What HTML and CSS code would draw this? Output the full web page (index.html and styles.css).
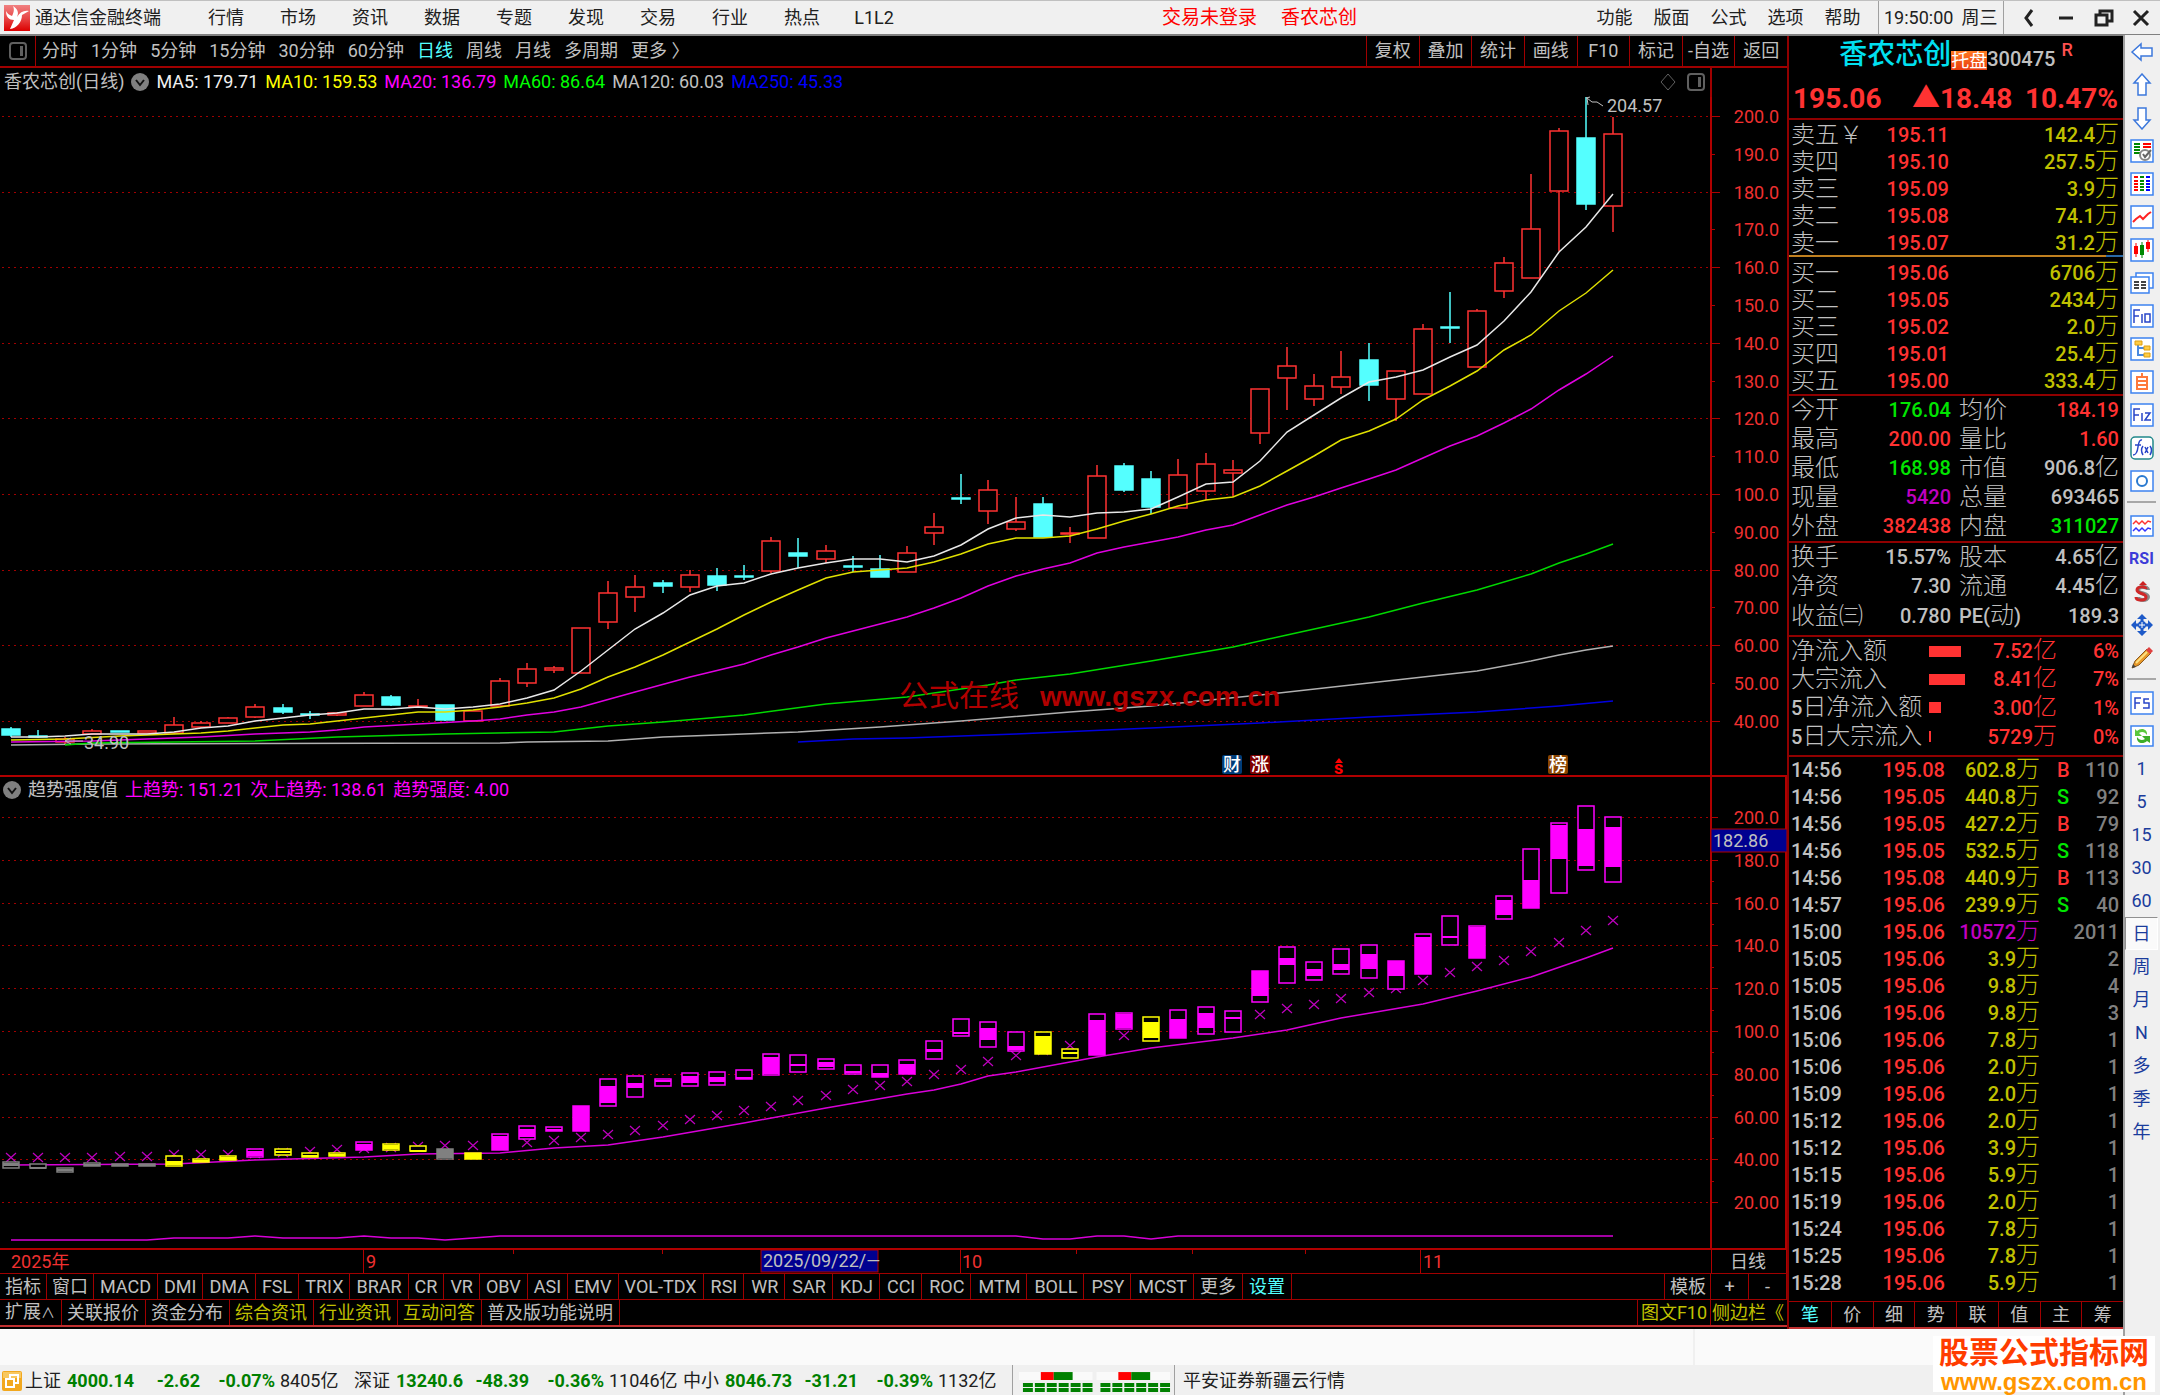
FILE: index.html
```html
<!DOCTYPE html>
<html lang="zh-CN">
<head>
<meta charset="utf-8">
<title>通达信金融终端</title>
<link rel="stylesheet" href="styles.css">
</head>
<body>
<header class="menubar">
  <svg class="logo" viewBox="0 0 26 26" aria-hidden="true"><defs><linearGradient id="lg" x1="0" y1="0" x2="0" y2="1"><stop offset="0" stop-color="#f08080"/><stop offset=".5" stop-color="#e84848"/><stop offset="1" stop-color="#dc0000"/></linearGradient></defs><rect width="26" height="26" fill="url(#lg)"/><path d="M2 6C2 12 5 15 10 15L6 24C13 23 18 17 18 10L25 6C20 5 16 7 13 12C15 8 14 4 9 1C11 5 9 9 8 11C5 10 3 8 2 6Z" fill="#fff"/></svg>
  <h1>通达信金融终端</h1>
  <nav class="menu-main">
    <button>行情</button><button>市场</button><button>资讯</button><button>数据</button><button>专题</button><button>发现</button><button>交易</button><button>行业</button><button>热点</button><button>L1L2</button>
  </nav>
  <div class="login"><span>交易未登录</span><span>香农芯创</span></div>
  <nav class="menu-side">
    <button>功能</button><button>版面</button><button>公式</button><button>选项</button><button>帮助</button>
  </nav>
  <div class="clock"><span>19:50:00</span><span>周三</span></div>
  <div class="win">
    <button aria-label="后退"><svg viewBox="0 0 20 20"><path d="M13 2L7 10L13 18" /></svg></button>
    <button aria-label="最小化"><svg viewBox="0 0 20 20"><path d="M3 10H17"/></svg></button>
    <button aria-label="还原"><svg viewBox="0 0 20 20"><path d="M2 7H13V17H2ZM6 7V3H18V13H13"/></svg></button>
    <button aria-label="关闭"><svg viewBox="0 0 20 20"><path d="M3 3L17 17M17 3L3 17"/></svg></button>
  </div>
</header>
<div class="shell">
<div class="work">
<main class="desk">
  <section class="charts">
    <div class="periods">
      <button class="pane" aria-label="面板"><svg viewBox="0 0 18 18"><rect x="1" y="1" width="16" height="16" rx="3"/><path class="f" d="M11 4h3v10h-3z"/></svg></button>
      <nav class="period-list">
        <button>分时</button><button>1分钟</button><button>5分钟</button><button>15分钟</button><button>30分钟</button><button>60分钟</button><button class="on">日线</button><button>周线</button><button>月线</button><button>多周期</button><button>更多 〉</button>
      </nav>
      <nav class="period-tools">
        <button>复权</button><button>叠加</button><button>统计</button><button>画线</button><button>F10</button><button>标记</button><button>-自选</button><button>返回</button>
      </nav>
    </div>
    <div class="legend legend-k">
      <div class="legend-text">
        <span class="name">香农芯创(日线)</span>
        <button class="fold" aria-label="展开"><svg viewBox="0 0 18 18"><circle cx="9" cy="9" r="9"/><path d="M5 7l4 5l4-5"/></svg></button>
        <span class="c-white">MA5: 179.71</span><span class="c-yellow">MA10: 159.53</span><span class="c-mag">MA20: 136.79</span><span class="c-green">MA60: 86.64</span><span class="c-gray">MA120: 60.03</span><span class="c-blue">MA250: 45.33</span>
        <span class="legend-tools"><svg viewBox="0 0 18 18"><path d="M9 1L16 9L9 17L2 9Z"/></svg><svg viewBox="0 0 18 18"><rect x="1" y="1" width="16" height="16" rx="3"/><path class="f" d="M11 4h3v10h-3z"/></svg></span>
      </div>
      <div class="axis-cell"></div>
    </div>
    <svg id="kline" class="plot" viewBox="0 97 1787 678" role="img" aria-label="日线K线图"></svg>
    <div class="legend legend-t">
      <div class="legend-text">
        <button class="fold" aria-label="展开"><svg viewBox="0 0 18 18"><circle cx="9" cy="9" r="9"/><path d="M5 7l4 5l4-5"/></svg></button>
        <span class="c-gray">趋势强度值</span><span class="c-mag">上趋势: 151.21</span><span class="c-mag">次上趋势: 138.61</span><span class="c-mag">趋势强度: 4.00</span>
      </div>
      <div class="axis-cell box"></div>
    </div>
    <svg id="trend" class="plot" viewBox="0 803 1787 470" role="img" aria-label="趋势强度值"></svg>
    <div class="tabs tabs-ind">
      <button>指标</button><button>窗口</button><button>MACD</button><button>DMI</button><button>DMA</button><button>FSL</button><button>TRIX</button><button>BRAR</button><button>CR</button><button>VR</button><button>OBV</button><button>ASI</button><button>EMV</button><button>VOL-TDX</button><button>RSI</button><button>WR</button><button>SAR</button><button>KDJ</button><button>CCI</button><button>ROC</button><button>MTM</button><button>BOLL</button><button>PSY</button><button>MCST</button><button>更多</button><button class="on">设置</button>
      <span class="fill"></span><button>模板</button><button class="half">+</button><button class="half">-</button>
    </div>
    <div class="tabs tabs-ext">
      <button>扩展<small>∧</small></button><button>关联报价</button><button>资金分布</button><button class="hot">综合资讯</button><button class="hot">行业资讯</button><button class="hot">互动问答</button><button>普及版功能说明</button>
      <span class="fill"></span><button class="hot f10">图文F10</button><button class="hot sidebar-btn">侧边栏《</button>
    </div>
  </section>

  <aside class="quote">
    <div class="q-head">
      <div class="q-name"><strong>香农芯创</strong><em>托盘</em><span>300475</span><sup>R</sup></div>
      <div class="q-price"><b>195.06</b><b>▲18.48</b><b>10.47%</b></div>
    </div>
    <table class="book sell">
      <tr><th>卖五￥</th><td>195.11</td><td>142.4<i>万</i></td></tr>
      <tr><th>卖四</th><td>195.10</td><td>257.5<i>万</i></td></tr>
      <tr><th>卖三</th><td>195.09</td><td>3.9<i>万</i></td></tr>
      <tr><th>卖二</th><td>195.08</td><td>74.1<i>万</i></td></tr>
      <tr><th>卖一</th><td>195.07</td><td>31.2<i>万</i></td></tr>
    </table>
    <div class="ratio"><span></span></div>
    <table class="book buy">
      <tr><th>买一</th><td>195.06</td><td>6706<i>万</i></td></tr>
      <tr><th>买二</th><td>195.05</td><td>2434<i>万</i></td></tr>
      <tr><th>买三</th><td>195.02</td><td>2.0<i>万</i></td></tr>
      <tr><th>买四</th><td>195.01</td><td>25.4<i>万</i></td></tr>
      <tr><th>买五</th><td>195.00</td><td>333.4<i>万</i></td></tr>
    </table>
    <table class="stats">
      <tr><th>今开</th><td class="up2">176.04</td><th>均价</th><td class="red">184.19</td></tr>
      <tr><th>最高</th><td class="red">200.00</td><th>量比</th><td class="red">1.60</td></tr>
      <tr><th>最低</th><td class="up2">168.98</td><th>市值</th><td>906.8<i>亿</i></td></tr>
      <tr><th>现量</th><td class="pur">5420</td><th>总量</th><td>693465</td></tr>
      <tr><th>外盘</th><td class="red">382438</td><th>内盘</th><td class="up2">311027</td></tr>
    </table>
    <table class="stats fin">
      <tr><th>换手</th><td>15.57%</td><th>股本</th><td>4.65<i>亿</i></td></tr>
      <tr><th>净资</th><td>7.30</td><th>流通</th><td>4.45<i>亿</i></td></tr>
      <tr><th>收益㈢</th><td>0.780</td><th><b>PE(</b>动<b>)</b></th><td>189.3</td></tr>
    </table>
    <table class="flow">
      <tr><th>净流入额</th><td><span class="bar" style="width:32px"></span></td><td>7.52<i>亿</i></td><td>6%</td></tr>
      <tr><th>大宗流入</th><td><span class="bar" style="width:36px"></span></td><td>8.41<i>亿</i></td><td>7%</td></tr>
      <tr><th><b>5</b>日净流入额</th><td><span class="bar" style="width:12px"></span></td><td>3.00<i>亿</i></td><td>1%</td></tr>
      <tr><th><b>5</b>日大宗流入</th><td><span class="bar" style="width:2px"></span></td><td>5729<i>万</i></td><td>0%</td></tr>
    </table>
    <table class="ticks">
      <tr><td>14:56</td><td>195.08</td><td>602.8<i>万</i></td><td class="red">B</td><td>110</td></tr>
      <tr><td>14:56</td><td>195.05</td><td>440.8<i>万</i></td><td class="up2">S</td><td>92</td></tr>
      <tr><td>14:56</td><td>195.05</td><td>427.2<i>万</i></td><td class="red">B</td><td>79</td></tr>
      <tr><td>14:56</td><td>195.05</td><td>532.5<i>万</i></td><td class="up2">S</td><td>118</td></tr>
      <tr><td>14:56</td><td>195.08</td><td>440.9<i>万</i></td><td class="red">B</td><td>113</td></tr>
      <tr><td>14:57</td><td>195.06</td><td>239.9<i>万</i></td><td class="up2">S</td><td>40</td></tr>
      <tr><td>15:00</td><td>195.06</td><td class="pur">10572<i>万</i></td><td></td><td>2011</td></tr>
      <tr><td>15:05</td><td>195.06</td><td>3.9<i>万</i></td><td></td><td>2</td></tr>
      <tr><td>15:05</td><td>195.06</td><td>9.8<i>万</i></td><td></td><td>4</td></tr>
      <tr><td>15:06</td><td>195.06</td><td>9.8<i>万</i></td><td></td><td>3</td></tr>
      <tr><td>15:06</td><td>195.06</td><td>7.8<i>万</i></td><td></td><td>1</td></tr>
      <tr><td>15:06</td><td>195.06</td><td>2.0<i>万</i></td><td></td><td>1</td></tr>
      <tr><td>15:09</td><td>195.06</td><td>2.0<i>万</i></td><td></td><td>1</td></tr>
      <tr><td>15:12</td><td>195.06</td><td>2.0<i>万</i></td><td></td><td>1</td></tr>
      <tr><td>15:12</td><td>195.06</td><td>3.9<i>万</i></td><td></td><td>1</td></tr>
      <tr><td>15:15</td><td>195.06</td><td>5.9<i>万</i></td><td></td><td>1</td></tr>
      <tr><td>15:19</td><td>195.06</td><td>2.0<i>万</i></td><td></td><td>1</td></tr>
      <tr><td>15:24</td><td>195.06</td><td>7.8<i>万</i></td><td></td><td>1</td></tr>
      <tr><td>15:25</td><td>195.06</td><td>7.8<i>万</i></td><td></td><td>1</td></tr>
      <tr><td>15:28</td><td>195.06</td><td>5.9<i>万</i></td><td></td><td>1</td></tr>
    </table>
    <nav class="q-tabs"><button class="on">笔</button><button>价</button><button>细</button><button>势</button><button>联</button><button>值</button><button>主</button><button>筹</button></nav>
  </aside>
</main>
<div class="strip"><span></span><span></span></div>
<footer class="status">
  <svg class="st-icon" viewBox="0 0 20 20" aria-hidden="true"><rect width="20" height="20" rx="2" fill="#f2a81e"/><rect x="1" y="1" width="18" height="6" fill="#f8c860"/><path d="M8 8V4h8v8h-4M4 8h8v8H4z" fill="none" stroke="#fff" stroke-width="2"/></svg>
  <div class="idx"><span>上证</span><b>4000.14</b><b>-2.62</b><b>-0.07%</b><span>8405亿</span></div>
  <div class="idx"><span>深证</span><b>13240.6</b><b>-48.39</b><b>-0.36%</b><span>11046亿</span></div>
  <div class="idx"><span>中小</span><b>8046.73</b><b>-31.21</b><b>-0.39%</b><span>1132亿</span></div>
  <svg class="leds" viewBox="0 0 162 32" aria-hidden="true">
    <g id="led"><rect x="6" y="7" width="74" height="8" fill="#fafafa"/><path d="M28 7h13v8h-13z" fill="#f00"/><path d="M41 7h19v8h-19z" fill="#008000"/><path d="M10 20H80M10 25H80" stroke="#008000" stroke-width="4" stroke-dasharray="10 2"/></g>
    <use href="#led" x="78"/>
  </svg>
  <span class="server">平安证券新疆云行情</span>
</footer>
</div>

<nav class="toolbar">
  <button aria-label="左移"><svg viewBox="0 0 24 24"><path class="arr" d="M2 12L11 4V8H22V16H11V20Z"/></svg></button>
  <button aria-label="上移"><svg viewBox="0 0 24 24"><path class="arr" d="M12 1L20 10H16V22H8V10H4Z"/></svg></button>
  <button aria-label="下移"><svg viewBox="0 0 24 24"><path class="arr" d="M12 23L20 14H16V2H8V14H4Z"/></svg></button>
  <button aria-label="报价"><svg viewBox="0 0 24 24"><rect class="frame" x="1" y="1" width="22" height="22"/><path d="M4 5h6M4 8h6M4 11h6M4 14h6" stroke="#080" stroke-width="2"/><path d="M13 5h8M13 8h8" stroke="#f00" stroke-width="2"/><circle cx="15" cy="16" r="5" fill="#fff" stroke="#888" stroke-width="2"/><path d="M13 15l2 3l6-7" fill="none" stroke="#666" stroke-width="2"/></svg></button>
  <button aria-label="列表"><svg viewBox="0 0 24 24"><rect class="frame" x="1" y="1" width="22" height="22"/><g stroke-width="2"><path d="M4 5h4M4 9h4M4 12h4M4 15h4M4 18h4" stroke="#f00"/><path d="M10 5h4M10 9h4M10 12h4M10 15h4M10 18h4" stroke="#080"/><path d="M16 5h4M16 9h4M16 12h4M16 15h4M16 18h4" stroke="#00f"/></g></svg></button>
  <button aria-label="分时图"><svg viewBox="0 0 24 24"><rect class="frame" x="1" y="1" width="22" height="22"/><path d="M3 17L6 14L10 11L13 14L18 9L21 7" fill="none" stroke="#f22" stroke-width="2"/></svg></button>
  <button aria-label="K线图"><svg viewBox="0 0 24 24"><rect class="frame" x="1" y="1" width="22" height="22"/><path d="M6 5v14M18 2v12" stroke="#f00" stroke-width="1"/><path d="M12 4v16" stroke="#080"/><path d="M4 8h4v8H4zM16 4h4v7h-4z" fill="#f00"/><path d="M10 7h4v10h-4z" fill="#080"/></svg></button>
  <button aria-label="多窗口"><svg viewBox="0 0 24 24"><rect class="frame" x="6" y="2" width="17" height="15"/><rect class="frame" x="1" y="6" width="18" height="16"/><path d="M4 11h5M11 11h5M4 14h5M11 14h5M4 17h5M11 17h5" stroke="#444" stroke-width="2"/></svg></button>
  <button aria-label="F10"><svg viewBox="0 0 24 24"><rect class="frame" x="1" y="1" width="22" height="22"/><path class="ink" d="M4 19V6H10M4 12H9M12 10V19M15 10H20V18H15Z"/></svg></button>
  <button aria-label="板块树"><svg viewBox="0 0 24 24"><rect class="frame" x="1" y="1" width="22" height="22"/><path d="M8 7V18H14M8 11H14" fill="none" stroke="#4a8ae0" stroke-width="2"/><path d="M5 4h7v4H5zM14 9h6v4h-6zM14 16h6v4h-6z" fill="#fc4" stroke="#e0a010"/></svg></button>
  <button aria-label="自选"><svg viewBox="0 0 24 24"><rect class="frame" x="1" y="1" width="22" height="22"/><path d="M7 7H17V19H7ZM7 11H17M7 15H17M12 3V7" fill="none" stroke="#ff7a3c" stroke-width="2"/></svg></button>
  <button aria-label="F12"><svg viewBox="0 0 24 24"><rect class="frame" x="1" y="1" width="22" height="22"/><path class="ink" d="M4 18V6H10M4 12H9M12 10V18M15 10H20L15 17H21"/></svg></button>
  <button aria-label="公式"><svg viewBox="0 0 24 24"><rect x="1" y="1" width="22" height="22" rx="4" fill="#fff" stroke="#20888a" stroke-width="1.5"/><path class="ink" d="M3 19Q7 19 8 11T12 4M5 9H11M13 10Q10 14 13 19M15 11L18 17M18 11L15 17M20 10Q23 14 20 19"/></svg></button>
  <button aria-label="圆圈"><svg viewBox="0 0 24 24"><rect class="frame" x="1" y="2" width="22" height="20"/><circle cx="12" cy="12" r="5" fill="none" stroke="#2a7ad0" stroke-width="2"/></svg></button>
  <hr>
  <button aria-label="波形"><svg viewBox="0 0 24 24"><rect class="frame" x="1" y="2" width="22" height="20"/><path d="M3 10l3-3l3 3l3-3l3 3l3-3l3 1" fill="none" stroke="#f33" stroke-width="1.5"/><path d="M3 17l3-3l3 3l3-3l3 3l3-3l3 1" fill="none" stroke="#33f" stroke-width="1.5"/></svg></button>
  <button class="rsi">RSI</button>
  <button aria-label="资金"><svg viewBox="0 0 24 24"><path d="M13 1l4 4H9z" fill="#c22"/><path d="M18 10C18 6 8 6 8 10S18 13 18 17S8 21 8 17" fill="none" stroke="#888" stroke-width="4"/><path d="M16 9C16 6 7 6 7 10S16 13 16 17S6 21 6 17" fill="none" stroke="#d02828" stroke-width="3"/></svg></button>
  <button aria-label="移动"><svg viewBox="0 0 24 24"><path d="M12 1l5 5H7zM12 23l5-5H7zM1 12l5-5v10zM23 12l-5-5v10z" fill="#1e5ac8"/><path d="M12 6v12M6 12h12" stroke="#1e5ac8" stroke-width="3"/><circle cx="12" cy="12" r="4" fill="#1e5ac8"/><path d="M12 9v6M9 12h6" stroke="#fff"/></svg></button>
  <button aria-label="画笔"><svg viewBox="0 0 24 24"><path d="M2 22L5 15L17 3L21 7L9 19Z" fill="#e89828" stroke="#8a5a20"/><path d="M6 17L17 6" stroke="#fce080" stroke-width="2"/><path d="M16 4L19 1L23 5L20 8Z" fill="#e04040"/><path d="M2 22l1-4l3 3z" fill="#444"/></svg></button>
  <hr>
  <button aria-label="F5"><svg viewBox="0 0 24 24"><rect class="frame" x="1" y="1" width="22" height="22"/><path class="ink" d="M5 18V7H11M5 12H10M19 8H14V12H19V17H13"/></svg></button>
  <button aria-label="刷新"><svg viewBox="0 0 24 24"><rect class="frame" x="1" y="2" width="22" height="20"/><path d="M5 5V12H12L9 9C12 7 15 8 17 11C18 5 11 3 7 7Z" fill="#5ac83c"/><path d="M20 19V12H12L15 15C12 17 9 16 7 13C6 19 13 21 17 17Z" fill="#3cae28"/></svg></button>
  <button>1</button><button>5</button><button>15</button><button>30</button><button>60</button><button class="cur">日</button><button>周</button><button>月</button><button>N</button><button>多</button><button>季</button><button>年</button>
</nav>
</div>
<div class="brand"><strong>股票公式指标网</strong><span>www.gszx.com.cn</span></div>
<script src="chart.js"></script>
</body>
</html>
```
FILE: styles.css
```css
* { box-sizing: border-box; }
body {
  margin: 0;
  position: relative;
  background: #f0f0f0;
  color: #c0c0c0;
  font: 18px/24px Roboto, "Noto Sans CJK SC", sans-serif;
}
button {
  border: 0; padding: 0; margin: 0; background: none; color: inherit;
  font: inherit; white-space: nowrap; cursor: pointer;
}
i { font-style: normal; }

/* top menu */
.menubar {
  display: flex; align-items: center; height: 36px;
  border-top: 1px solid #c0c0c0; border-bottom: 2px solid #808080;
  background: #f0f0f0; color: #202020; padding-left: 4px;
}
.logo { width: 26px; height: 26px; flex: none; }
h1 { margin: 0 0 0 5px; font-size: 18px; font-weight: 400; width: 155px; }
.menu-main { display: flex; }
.menu-main button { width: 72px; }
.login { display: flex; gap: 24px; margin-left: auto; margin-right: 229px; color: #f00; font-size: 19px; }
.menu-side { display: flex; }
.menu-side button { width: 57px; }
.clock {
  display: flex; gap: 8px; align-self: stretch; align-items: center;
  margin-left: 7px; width: 126px; padding-left: 5px;
  border-left: 1px solid #a0a0a0; border-right: 1px solid #a0a0a0;
}
.win { display: flex; width: 156px; justify-content: space-around; padding-left: 6px; }
.win svg { display: block; width: 20px; height: 20px; fill: none; stroke: #222; stroke-width: 3; }

/* page frame */
.shell { display: grid; grid-template-columns: 1fr 37px; }
.desk { display: grid; grid-template-columns: 1fr 336px; background: #000; }
.charts { min-width: 0; }

/* period bar */
.periods { display: flex; height: 32px; border-bottom: 2px solid #a00000; }
.pane { width: 36px; border-right: 1px solid #a00000; display: grid; place-items: center; }
.pane svg, .legend-tools svg { width: 18px; height: 18px; fill: none; stroke: #606060; stroke-width: 2; }
.pane .f, .legend-tools .f { fill: #606060; stroke: none; }
.period-list { display: flex; gap: 13px; padding-left: 6px; }
.on { color: #54ffff; }
.period-tools { display: grid; grid-template-columns: repeat(8, 1fr); width: 421px; margin-left: auto; }
.period-tools button { border-left: 1px solid #a00000; }

/* chart legends */
.legend { display: flex; }
.legend-k { height: 29px; }
.legend-t { height: 28px; border-top: 2px solid #b00000; }
.legend-text { flex: 1; display: flex; align-items: center; gap: 7px; padding: 0 0 2px 4px; white-space: nowrap; }
.legend-t .legend-text { padding: 0 0 0 3px; }
.fold svg { display: block; width: 18px; height: 18px; fill: #808080; }
.fold path { fill: none; stroke: #111; stroke-width: 2; }
.legend-tools { display: flex; gap: 10px; margin-left: auto; padding-right: 5px; }
.legend-tools svg:first-child { stroke-width: 1; }
.axis-cell { width: 77px; border-left: 2px solid #a00000; }
.axis-cell.box { border-right: 2px solid #b00000; border-left-color: #b00000; }
.c-white { color: #f0f0f0; }
.c-yellow { color: #ff0; }
.c-mag { color: #f0f; }
.c-green { color: #0f0; }
.c-gray { color: #c0c0c0; }
.c-blue { color: #00f; }

/* plots */
.plot { display: block; width: 100%; height: auto; overflow: visible; font-size: 18px; }
.plot .grid { stroke: #a00000; stroke-width: 1; stroke-dasharray: 2 4; }
.plot .axis { stroke: #b00000; stroke-width: 2; fill: none; }
.plot .tick { stroke: #b00000; }
.plot .lab { fill: #f03030; text-anchor: end; }
.plot .up { fill: #000; stroke: #ff3232; stroke-width: 1.5; }
.plot .dn { fill: #54ffff; stroke: #54ffff; stroke-width: 1.5; }
.plot .line { fill: none; stroke-width: 1.5; }
.plot .cross { stroke: #c000c0; stroke-width: 1.2; fill: none; }
.plot .date { fill: #f03030; }
.plot .cursor { fill: #000090; stroke: #b00000; }
.plot .txt { fill: #c0c0c0; }
.plot .wm { fill: #b00000; font-size: 30px; }
.plot .wm-url { font-family: "Liberation Sans", sans-serif; font-size: 28px; font-weight: 700; }
.plot .mark { fill: #fff; font-weight: 500; }

/* bottom tabs */
.tabs { display: flex; border-top: 1px solid #a00000; }
.tabs button { padding: 0 6px; border-right: 1px solid #a00000; }
.tabs .fill { flex: 1; border-right: 1px solid #a00000; }
.tabs .half { width: 38px; }
.tabs-ind { height: 26px; }
.tabs-ind button:nth-child(-n+2) { padding: 0 5px; }
.tabs-ind button:nth-child(n+15):nth-child(-n+24) { padding: 0 6px 0 7px; }
.tabs-ind .fill + button { padding: 0 4px 0 5px; }
.tabs-ext { height: 28px; border-bottom: 2px solid #c03030; }
.tabs-ext button { padding: 0 6px 0 5px; }
.tabs-ext small { font-size: 14px; }
.tabs .hot { color: #c0c000; }
.tabs .f10, .tabs .sidebar-btn { padding: 0 1px; }
.tabs .f10 { width: 73px; }
.tabs .sidebar-btn { width: 76px; text-align: left; border-right: 0; }

/* quote panel */
.quote { border-left: 2px solid #900000; font-size: 20px; font-weight: 500; }
.q-head { height: 84px; border-bottom: 2px solid #900000; }
.q-name { display: flex; justify-content: center; align-items: flex-start; height: 34px; }
.q-name strong { color: #00e0f0; font-size: 28px; line-height: 38px; font-weight: 500; }
.q-name em { font-style: normal; font-size: 18px; line-height: 19px; margin-top: 15px; background: linear-gradient(#ff7a20, #e83c10); color: #fff; font-weight: 400; }
.q-name span { line-height: 22px; margin-top: 12px; }
.q-name sup { color: #ff5050; font-size: 18px; line-height: 20px; padding: 4px 0 0 6px; }
.q-price { display: flex; justify-content: space-between; padding: 7px 5px 0 4px; color: #ff3232; font-size: 28px; line-height: 44px; }
.q-price b:nth-child(2) { margin-left: 18px; }
.quote table { border-collapse: collapse; table-layout: fixed; width: 100%; }
.quote td, .quote th { padding: 0; text-align: right; white-space: nowrap; line-height: 27px; height: 27px; font-weight: 500; }
.quote th { text-align: left; font-weight: 300; font-size: 24px; }
.quote th b { font-size: 20px; font-weight: 500; }
.quote i { font-size: 24px; font-weight: 300; line-height: 20px; }
.quote .book td, .quote .book th { line-height: 24px; padding-top: 2px; }
.quote tr > :first-child { padding-left: 2px; }
.quote tr > :last-child { padding-right: 4px; }
.book td { color: #c0c000; }
.book td:nth-child(2), .red, .flow td, .ticks td:nth-child(2) { color: #ff3232; }
.book th { width: 72px; }
.book td:nth-child(2) { width: 88px; }
.ratio { height: 2px; background: #2a6aa8; }
.ratio span { display: block; width: 95%; height: 2px; background: #c08020; }
.quote .buy { margin: 1px 0; }
.quote .stats, .quote .flow { border-top: 2px solid #900000; }
.quote .stats td, .quote .stats th { height: 29px; line-height: 29px; }
.quote .flow td, .quote .flow th { height: 28px; line-height: 28px; }
.stats th:first-child { width: 78px; }
.stats td:nth-child(2) { width: 84px; }
.stats th:nth-child(3) { padding-left: 8px; }
.stats .up2, .ticks .up2 { color: #00e600; }
.quote .pur { color: #c000c0; }
.quote .fin { margin-bottom: 4px; }
.quote .flow { margin-bottom: 4px; }
.flow th { width: 140px; }
.flow td:nth-child(2) { width: 46px; text-align: left; }
.flow td:nth-child(3) { width: 82px; }
.bar { display: block; height: 11px; background: #ff3232; }
.quote .ticks { border-top: 2px solid #900000; margin-bottom: 4px; }
.ticks td:nth-child(1) { width: 62px; text-align: left; }
.ticks td:nth-child(2) { width: 94px; }
.ticks td:nth-child(3) { width: 95px; color: #c0c000; }
.ticks td:nth-child(4) { width: 32px; padding-left: 17px; text-align: left; }
.ticks .red { color: #ff3232; }
.quote .ticks .pur { color: #c000c0; }
.ticks td:nth-child(5) { color: #808080; }
.q-tabs { display: grid; grid-template-columns: repeat(8, 1fr); height: 28px; border-top: 1px solid #a00000; border-bottom: 2px solid #c03030; font-size: 18px; font-weight: 400; }
.q-tabs button + button { border-left: 1px solid #a00000; }

/* blank strip and status bar */
.strip { display: flex; height: 36px; background: #fafafa; }
.strip span:first-child { flex: 1; }
.strip span:last-child { width: 430px; border-left: 2px solid #f0f0f0; }
.status { display: flex; align-items: center; height: 32px; padding-left: 2px; color: #202020; border-bottom: 1px solid #1a2a3a; }
.st-icon { width: 20px; height: 20px; margin-right: 3px; }
.idx { display: grid; grid-template-columns: 42px 75px 58px 75px 1fr; width: 329px; white-space: nowrap; }
.idx b { color: #008000; }
.idx b:nth-child(n+3) { text-align: right; }
.idx span:last-child { padding-left: 5px; }
.leds { width: 163px; height: 32px; border-left: 1px solid #a0a0a0; border-right: 1px solid #a0a0a0; }
.server { padding-left: 8px; }

/* right toolbar */
.toolbar { display: flex; flex-direction: column; margin-top: -1px; border-left: 2px solid #a0a0a0; background: #f0f0f0; color: #1a3c9c; font-size: 18px; padding-right: 2px; }
.toolbar button { height: 33px; display: grid; place-items: center; }
.toolbar svg { width: 24px; height: 24px; }
.toolbar hr { width: 29px; height: 2px; margin: 4px auto 6px; border: 0; background: #a8a8a8; }
.toolbar .arr { fill: #fff; stroke: #3c78dc; stroke-width: 1.5; }
.toolbar .frame { fill: #fff; stroke: #3c82f0; stroke-width: 1.5; }
.toolbar .ink { fill: none; stroke: #2846c8; stroke-width: 1.5; }
.toolbar .rsi { font-size: 16px; font-weight: 700; color: #3c3cd8; }
.toolbar .cur { background: #fafafa; border: 1px solid #909090; border-right-color: #fff; border-bottom-color: #fff; }

/* site badge over the corner */
.brand {
  position: absolute; right: 5px; bottom: 5px; width: 222px; height: 56px;
  background: #fff; display: flex; flex-direction: column; align-items: center;
  white-space: nowrap; color: #ff3c00; font-size: 30px; line-height: 33px;
}
.brand span { color: #ff9600; font: 700 24px/26px "Liberation Sans", sans-serif; }
```
FILE: chart.js
```js
// Candles: [direction, high, body top, body bottom, low], in plot units.
const candles = [
  [0,727,729,735,737],[0,730,736,737,738],[1,737,739,742,745],[1,729,731,734,735],[0,731,731,732,732],[1,731,731,733,733],
  [1,717,725,733,734],[1,721,723,727,728],[1,717,718,723,723],[1,704,707,717,718],[0,704,708,712,714],[0,711,714,715,719],
  [1,712,713,715,716],[1,692,695,706,706],[0,695,697,705,706],[1,699,706,707,707],[0,705,705,720,721],[1,711,711,721,721],
  [1,678,681,706,706],[1,663,669,683,687],[1,666,668,670,673],[1,628,628,673,673],[1,581,593,622,629],[1,575,587,597,612],
  [0,580,583,586,593],[1,570,575,587,592],[0,568,576,585,591],[0,565,576,577,580],[1,537,541,571,573],[0,538,553,556,568],
  [1,545,551,559,563],[0,556,566,567,572],[0,555,569,577,577],[1,546,553,572,572],[1,513,527,533,545],[0,474,498,499,504],
  [1,480,490,511,524],[1,497,522,529,531],[0,497,504,537,537],[1,527,533,534,543],[1,465,476,538,538],[0,463,466,490,492],
  [0,471,479,507,514],[1,459,475,508,508],[1,453,464,491,500],[1,460,470,473,497],[1,389,389,433,444],[1,347,366,378,410],
  [1,374,386,399,406],[1,351,377,387,394],[0,343,360,385,401],[1,371,371,399,421],[1,324,329,394,394],[0,292,327,328,343],
  [1,309,311,367,367],[1,257,263,291,298],[1,174,229,278,278],[1,128,131,191,251],[0,97,138,204,210],[1,117,134,206,232]
];
const averages = [
  ['#0000e0', [[29,742],[31,739],[33,738],[37,734],[42,728],[46,723],[50,717],[54,712],[57,706],[59,701]]],
  ['#b0b0b0', [[0,745],[3,744],[18,743],[19,742],[22,741],[24,737],[26,735],[29,732],[32,727],[35,721],[39,712],[42,706],[46,695],[50,683],[54,671],[56,661],[57,655],[58,650],[59,646]]],
  ['#00d800', [[2,745],[3,743],[6,742],[9,741],[12,737],[16,734],[20,732],[22,726],[24,722],[27,715],[30,704],[33,697],[36,685],[37,680],[39,674],[42,661],[45,647],[47,635],[50,617],[52,603],[54,590],[56,574],[57,563],[58,554],[59,544]]],
  ['#e000e0', [[0,742],[3,741],[5,739],[7,737],[9,734],[11,732],[12,730],[13,727],[15,724],[17,721],[18,719],[19,715],[20,712],[21,707],[23,692],[25,677],[27,664],[28,655],[29,647],[30,638],[31,631],[32,624],[33,617],[34,608],[35,598],[36,586],[37,576],[38,569],[39,563],[40,553],[41,547],[42,542],[43,537],[44,530],[45,525],[46,515],[47,505],[48,497],[49,488],[50,479],[51,470],[52,458],[53,446],[54,436],[55,423],[56,409],[57,390],[58,374],[59,356]]],
  ['#e0e000', [[0,740],[2,739],[4,736],[6,734],[7,733],[8,731],[9,728],[10,725],[11,724],[12,721],[13,718],[14,715],[15,712],[16,712],[17,710],[18,707],[19,703],[20,698],[21,689],[22,677],[23,667],[24,655],[25,642],[26,629],[27,615],[28,602],[29,590],[30,578],[31,572],[32,570],[33,568],[34,562],[35,554],[36,544],[37,538],[38,538],[39,536],[40,529],[41,521],[42,514],[43,506],[44,500],[45,497],[46,486],[47,471],[48,456],[49,440],[50,431],[51,419],[52,400],[53,386],[54,371],[55,350],[56,335],[57,311],[58,293],[59,270]]],
  ['#e8e8e8', [[0,737],[1,737],[2,736],[3,734],[5,734],[6,732],[7,728],[8,726],[9,721],[10,718],[11,715],[12,713],[13,709],[14,709],[15,707],[16,709],[17,707],[18,704],[19,698],[20,690],[21,671],[22,650],[23,629],[24,613],[25,595],[26,586],[27,583],[28,574],[29,568],[30,563],[31,559],[32,559],[33,562],[34,556],[35,545],[36,529],[37,518],[38,515],[39,517],[40,513],[41,512],[42,509],[43,497],[44,484],[45,482],[46,461],[47,432],[48,415],[49,398],[50,382],[51,377],[52,370],[53,357],[54,345],[55,321],[56,292],[57,252],[58,227],[59,194]]]
];
const crosses = [1157,1157,1157,1157,1156,1156,1154,1154,1154,1153,1152,1151,1149,1148,1147,1146,1145,1145,1143,1142,1140,1137,1134,1130,1125,1119,1115,1110,1106,1100,1095,1089,1085,1081,1074,1069,1061,1055,1050,1045,1040,1035,1032,1029,1025,1020,1014,1008,1004,998,992,988,980,972,966,960,951,942,930,920];
const trendLine = [[0,1165],[6,1164],[9,1160],[13,1157],[15,1154],[18,1153],[20,1148],[22,1145],[24,1137],[27,1123],[30,1108],[33,1094],[34,1090],[35,1084],[36,1076],[37,1072],[39,1062],[40,1057],[42,1048],[45,1038],[47,1030],[49,1018],[52,1004],[54,991],[56,977],[58,958],[59,948]];
const strength = [[0,1240],[5,1240],[6,1238],[8,1238],[9,1236],[10,1238],[12,1238],[13,1236],[14,1238],[15,1238],[16,1240],[17,1238],[18,1236],[37,1236],[38,1239],[39,1239],[40,1236],[41,1236],[42,1239],[43,1236],[59,1236]];
const yellow = [6,7,8,10,11,12,14,15,17,38,39,42];
const gray = [0,1,2,3,4,5,16];

const AXIS = 1711;
const px = i => Math.round(11 + 27.15 * i);
const poly = (pts, color) => `<polyline class="line" stroke="${color}" points="${pts.map(([i, y]) => px(i) + ',' + y).join(' ')}"/>`;
const text = (cls, x, y, s) => `<text class="${cls}" x="${x}" y="${y}">${s}</text>`;
const label = v => v >= 100 ? v.toFixed(1) : v.toFixed(2);

function priceChart() {
  const y = p => Math.round(116 + (200 - p) * 3.78);
  let s = '';
  for (let p = 200; p >= 40; p -= 10) {
    const major = p % 20 === 0;
    if (major) s += `<path class="grid" d="M2 ${y(p)}.5H${AXIS}"/>`;
    s += `<path class="tick" d="M${AXIS} ${y(p)}.5h${major ? 9 : 4}"/>` + text('lab', 1779, y(p) + 7, label(p));
  }
  s += `<path class="axis" d="M${AXIS} 97V775"/>`;
  candles.forEach(([up, hi, top, bot, lo], i) => {
    const x = px(i);
    s += `<g class="${up ? 'up' : 'dn'}"><path d="M${x} ${hi}V${top}M${x} ${bot}V${lo}"/><rect x="${x - 9}" y="${top}" width="18" height="${Math.max(bot - top, 1)}"/></g>`;
  });
  averages.forEach(([c, pts]) => { s += poly(pts, c); });
  s += '<path d="M1586 98l4-1M1587 98l5 4l5 0l6 4M1587 98l1 7" fill="none" stroke="#c0c0c0"/>' + text('txt', 1607, 112, '204.57');
  s += '<path d="M65 741h18M65 741l6-3M65 741l6 3" stroke="#c0c0c0" fill="none"/>' + text('txt', 84, 749, '34.90');
  s += text('wm', 899, 706, '公式在线') + text('wm wm-url', 1040, 706, 'www.gszx.com.cn');
  [[1222, '#003c78', '财'], [1250, '#800000', '涨'], [1548, '#8a4400', '榜']].forEach(([x, c, t]) => {
    s += `<rect x="${x}" y="755" width="20" height="19" rx="2" fill="${c}"/>` + text('mark', x + 1, 771, t);
  });
  s += '<path d="M1339 758l4 5h-8z" fill="#f00"/><text x="1334" y="774" fill="#f00" font-weight="700">s</text>';
  document.getElementById('kline').innerHTML = s;
}

function trendChart() {
  const y = p => Math.round(817 + (200 - p) * 2.14);
  const map = v => Math.round(817 + (v - 117) * 0.5654);
  let s = '';
  for (let p = 200; p >= 20; p -= 10) {
    const major = p % 20 === 0;
    if (major) s += `<path class="grid" d="M2 ${y(p)}.5H${AXIS}"/>` + text('lab', 1779, y(p) + 7, label(p));
    s += `<path class="tick" d="M${AXIS} ${y(p)}.5h${major ? 7 : 3}"/>`;
  }
  crosses.forEach((c, i) => {
    const x = px(i);
    s += `<path class="cross" d="M${x - 5} ${c - 4}l10 9M${x + 5} ${c - 4}l-10 9"/>`;
  });
  s += poly(trendLine, '#d800d8') + poly(strength, '#d800d8');
  candles.forEach(([, hi, top, bot, lo], i) => {
    const c = yellow.includes(i) ? '#ffff00' : gray.includes(i) ? '#808080' : '#ff00ff';
    const x = px(i) - 8, a = map(hi), b = map(lo), t = map(top), u = map(bot);
    s += `<rect x="${x}" y="${a}" width="16" height="${Math.max(b - a, 2)}" fill="#000" stroke="${c}" stroke-width="1.5"/>`;
    s += `<rect x="${x}" y="${t}" width="16" height="${Math.max(u - t, 2)}" fill="${c}"/>`;
  });
  s += `<path class="axis" d="M${AXIS} 803V1249H1786V803"/><path class="axis" d="M0 1249H${AXIS}"/><path class="tick" d="M${AXIS}.5 1249V1273M1786.5 1249V1273"/>`;
  s += `<rect class="cursor" x="${AXIS}" y="829" width="76" height="23"/>` + text('txt', 1713, 847, '182.86');
  s += '<path class="tick" d="M363.5 1250V1273M960.5 1250V1273M1420.5 1250V1273M513.5 1250v4M662.5 1250v4M1076.5 1250v4M1192.5 1250v4M1305.5 1250v4"/>';
  s += text('date', 11, 1268, '2025年') + text('date', 366, 1268, '9') + text('date', 962, 1268, '10') + text('date', 1423, 1268, '11');
  s += '<rect class="cursor" x="761" y="1250" width="117" height="22"/>' + text('txt', 763, 1267, '2025/09/22/—') + text('txt', 1730, 1268, '日线');
  document.getElementById('trend').innerHTML = s;
}

priceChart();
trendChart();
```
